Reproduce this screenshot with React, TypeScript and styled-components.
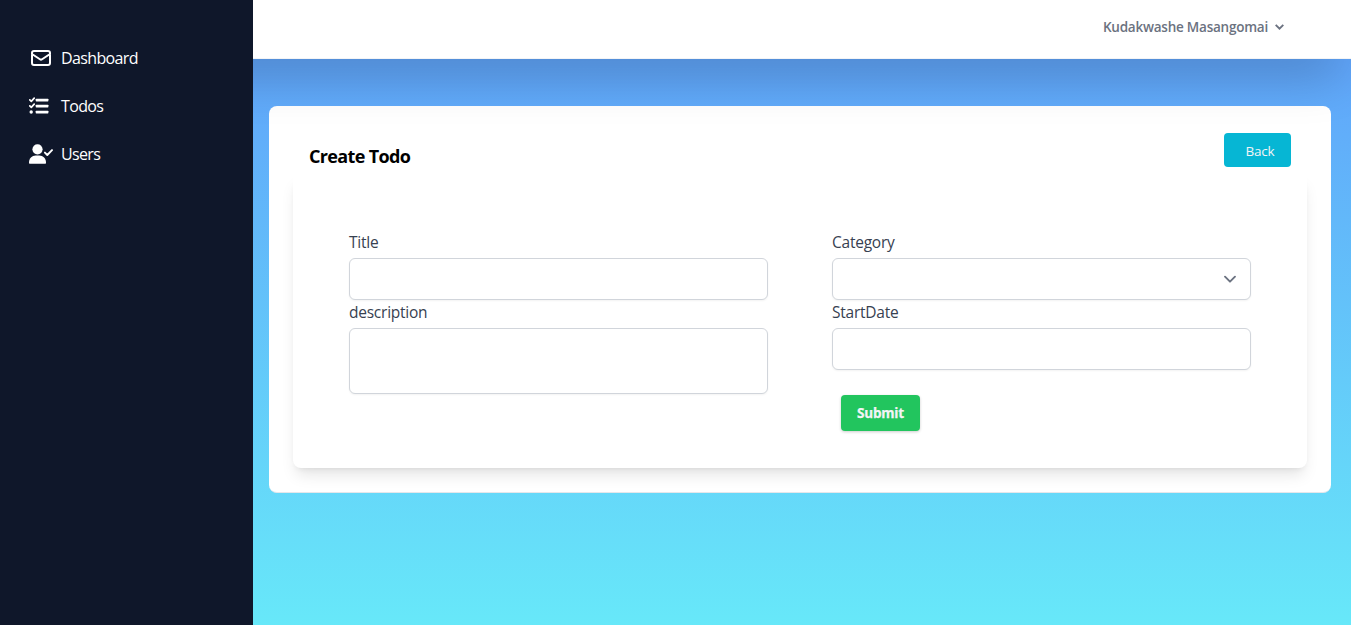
import React from "react";
import styled, { createGlobalStyle, css } from "styled-components";
import { HiOutlineMail } from "react-icons/hi";

const Global = createGlobalStyle`
  *, *::before, *::after { box-sizing: border-box; }
  body { margin: 0; background: #fff; overflow: hidden; font-family: "Open Sans", "Noto Sans", sans-serif; }
`;

const Page = styled.div`
  display: grid;
  grid-template-columns: 253px 1fr;
  height: 625px;
  overflow: hidden;
`;

const Sidebar = styled.aside`
  background: #0f172a;
  padding: 34px 29px;
  display: flex;
  flex-direction: column;
  z-index: 3;
`;

const NavLink = styled.a`
  display: flex;
  align-items: center;
  height: 48px;
  color: #fff;
  font-size: 16px;
`;

const IconSlot = styled.span`
  display: flex;
  width: 32px;
`;

const NavText = styled.span`
  letter-spacing: -0.64px;
`;

const Main = styled.div`
  display: flex;
  flex-direction: column;
  min-width: 0;
`;

const TopBar = styled.header`
  height: 59px;
  flex: none;
  margin-left: -253px;
  padding: 0 66px 4px 0;
  display: flex;
  align-items: center;
  justify-content: flex-end;
  gap: 6px;
  background: #fff;
  border-bottom: 1px solid #f3f4f6;
  box-shadow: 0 25px 50px -12px rgba(0, 0, 0, 0.25);
  z-index: 2;
`;

const UserName = styled.span`
  color: #6b7280;
  font-size: 13.5px;
  font-weight: 600;
  letter-spacing: -0.23px;
`;

const Content = styled.main`
  flex: 1;
  padding: 47px 20px 0 16px;
  background: linear-gradient(to bottom, #60a5fa, #67e8f9);
`;

const Card = styled.section`
  height: 387px;
  padding: 27px 24px 24px;
  background: #fff;
  border-radius: 8px;
  border-bottom: 1px solid #e5e7eb;
`;

const CardHeader = styled.div`
  display: flex;
  justify-content: space-between;
  align-items: flex-start;
  height: 41px;
  padding: 0 16px;
`;

const Heading = styled.h1`
  margin: 10px 0 0;
  font-size: 18px;
  line-height: 26px;
  font-weight: 700;
  letter-spacing: -0.66px;
  color: #000;
`;

const BackButton = styled.button`
  width: 67px;
  height: 34px;
  padding: 2px 0 0 5px;
  border: 0;
  border-radius: 4px;
  background: #06b6d4;
  color: #f3f4f6;
  font: 400 13.5px "Open Sans", sans-serif;
  letter-spacing: -0.25px;
`;

const Form = styled.form`
  display: grid;
  grid-template-columns: 419px 419px;
  column-gap: 64px;
  align-items: start;
  height: 294px;
  padding: 56px 56px 0;
  border-radius: 8px;
  box-shadow: 0 10px 15px -3px rgba(0, 0, 0, 0.1), 0 4px 6px -4px rgba(0, 0, 0, 0.1);
`;

const Column = styled.div`
  display: flex;
  flex-direction: column;
`;

const Label = styled.label`
  height: 28px;
  line-height: 25px;
  font-size: 15.5px;
  color: #374151;
  letter-spacing: -0.24px;
`;

const field = css`
  display: block;
  width: 100%;
  margin: 0;
  border: 1px solid #d1d5db;
  border-radius: 6px;
  background: #fff;
  box-shadow: 0 1px 2px rgba(0, 0, 0, 0.05);
`;

const Input = styled.input`
  ${field}
  height: 42px;
`;

const TextArea = styled.textarea`
  ${field}
  height: 66px;
  resize: none;
`;

const Select = styled.div`
  ${field}
  height: 42px;
  padding-right: 10px;
  display: flex;
  align-items: center;
  justify-content: flex-end;
`;

const SubmitButton = styled.button`
  width: 79px;
  height: 36px;
  margin: 25px 0 0 9px;
  padding: 0;
  border: 0;
  border-radius: 4px;
  background: #22c55e;
  color: #f3f4f6;
  font: 700 13.5px "Open Sans", sans-serif;
  letter-spacing: -0.2px;
  -webkit-text-stroke: 0.25px #f3f4f6;
  box-shadow: 0 1px 3px rgba(0, 0, 0, 0.2);
`;

const TasksIcon = () => (
  <svg width="20" height="18" viewBox="0 0 20 18" fill="currentColor">
    <rect x="6.7" y="1.7" width="12.7" height="2.7" rx="0.6" />
    <rect x="6.7" y="7.7" width="12.7" height="2.7" rx="0.6" />
    <rect x="6.7" y="13.7" width="12.7" height="2.7" rx="0.6" />
    <circle cx="2.2" cy="15" r="1.7" />
    <path
      d="M0.8 2.9 2.3 4.3 5.2 1.2M0.8 8.9 2.3 10.3 5.2 7.2"
      fill="none"
      stroke="currentColor"
      strokeWidth="1.7"
      strokeLinecap="round"
      strokeLinejoin="round"
    />
  </svg>
);

const UserCheckIcon = () => (
  <svg width="24" height="20" viewBox="0 0 24 20" fill="currentColor">
    <circle cx="8.5" cy="5.3" r="5.1" />
    <path d="M0 19v-.6C0 14.6 2.9 11.6 6.7 11.6h3.6c3.8 0 6.7 3 6.7 6.8v.6q0 .7-.7.7H.7Q0 19.7 0 19z" />
    <path
      d="M15.9 8.6 18.3 11 23 6.1"
      fill="none"
      stroke="currentColor"
      strokeWidth="1.9"
      strokeLinecap="round"
      strokeLinejoin="round"
    />
  </svg>
);

export default function App() {
  return (
    <>
      <Global />
      <Page>
        <Sidebar>
          <NavLink>
            <IconSlot><HiOutlineMail size={24} /></IconSlot>
            <NavText>Dashboard</NavText>
          </NavLink>
          <NavLink>
            <IconSlot><TasksIcon /></IconSlot>
            <NavText>Todos</NavText>
          </NavLink>
          <NavLink>
            <IconSlot><UserCheckIcon /></IconSlot>
            <NavText>Users</NavText>
          </NavLink>
        </Sidebar>
        <Main>
          <TopBar>
            <UserName>Kudakwashe Masangomai</UserName>
            <svg width="11" height="8" viewBox="0 0 11 8" fill="none" stroke="#6b7280" strokeWidth="1.9">
              <path d="M1.7 1.9 5.5 5.6 9.3 1.9" />
            </svg>
          </TopBar>
          <Content>
            <Card>
              <CardHeader>
                <Heading>Create Todo</Heading>
                <BackButton>Back</BackButton>
              </CardHeader>
              <Form>
                <Column>
                  <Label>Title</Label>
                  <Input />
                  <Label>description</Label>
                  <TextArea />
                </Column>
                <Column>
                  <Label>Category</Label>
                  <Select>
                    <svg width="20" height="20" viewBox="0 0 20 20" fill="none" stroke="#6b7280" strokeWidth="1.9" strokeLinecap="round" strokeLinejoin="round">
                      <path d="M5 7.7l5 5 5-5" />
                    </svg>
                  </Select>
                  <Label>StartDate</Label>
                  <Input />
                  <SubmitButton type="button">Submit</SubmitButton>
                </Column>
              </Form>
            </Card>
          </Content>
        </Main>
      </Page>
    </>
  );
}
